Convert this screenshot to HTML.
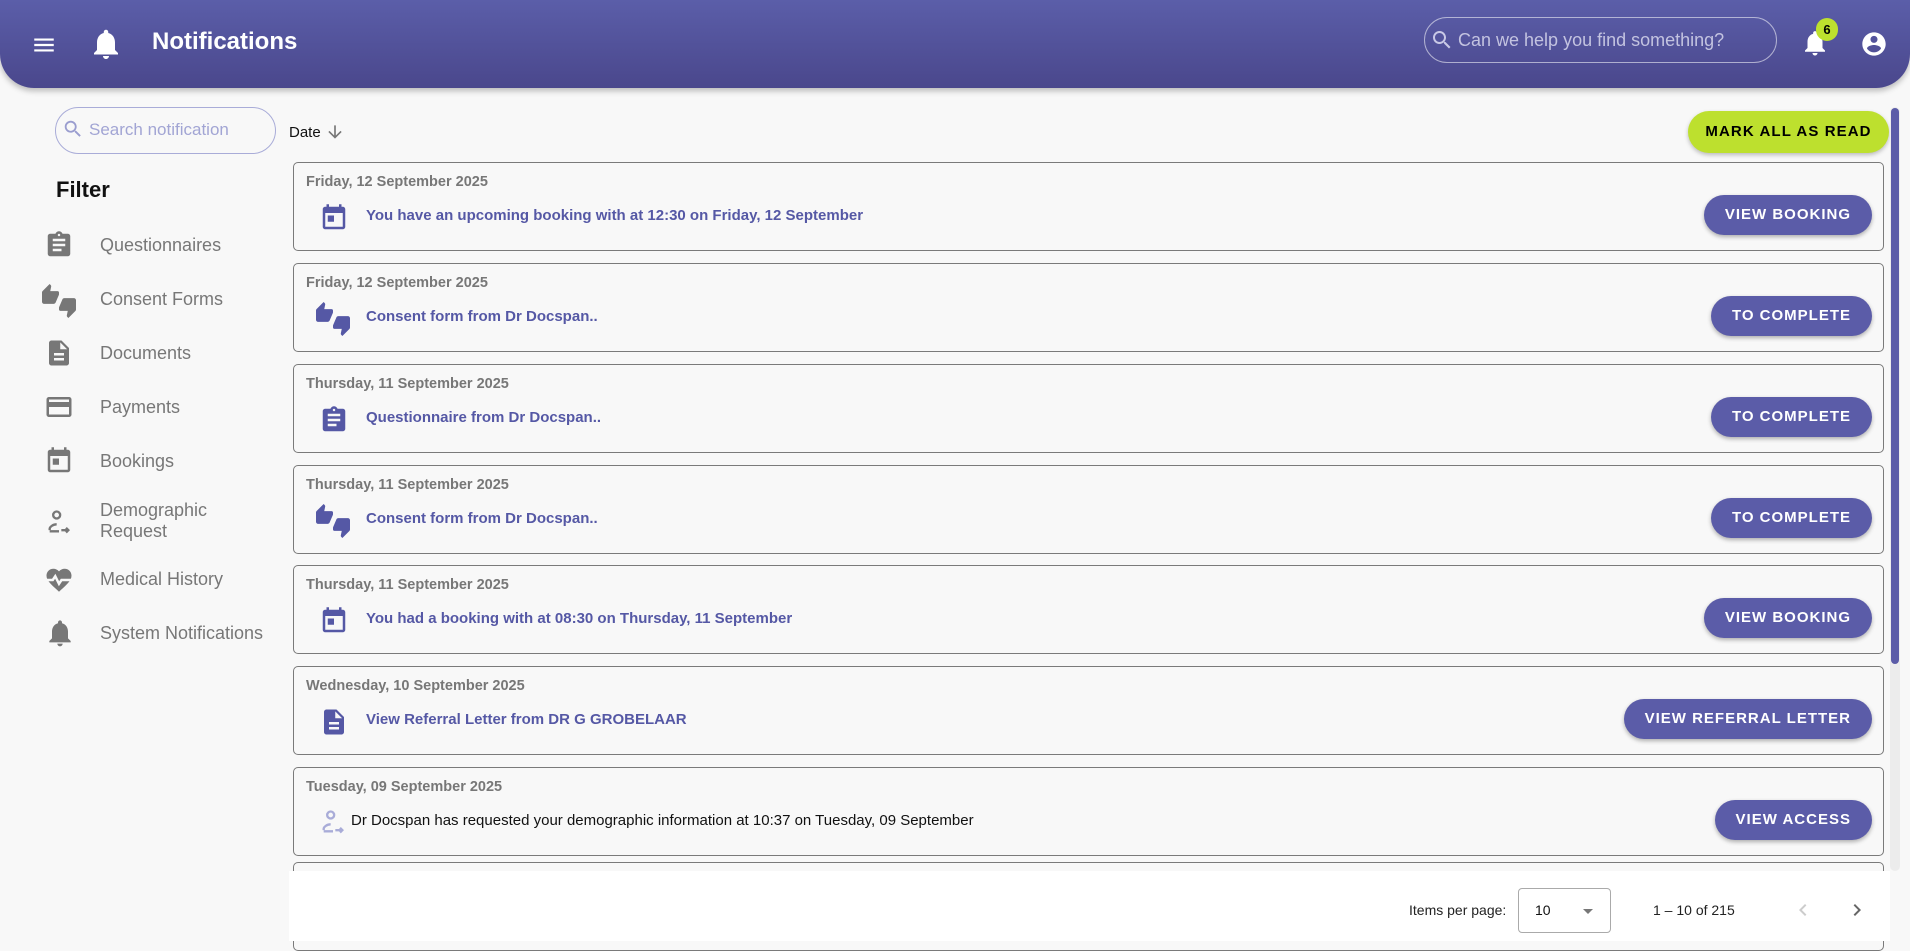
<!DOCTYPE html>
<html><head><meta charset="utf-8"><style>
*{margin:0;padding:0;box-sizing:border-box}
body{width:1910px;height:941px;overflow:hidden;background:#f8f8f8;font-family:"Liberation Sans",Arial,sans-serif;position:relative}
.abs{position:absolute}
.hdr{left:0;top:0;width:1910px;height:88px;background:linear-gradient(#5b5ea9,#4a478c);border-radius:0 0 34px 34px;box-shadow:0 3px 6px rgba(0,0,0,.25)}
svg{display:block}
.side{left:46px;color:#777;font-size:18px}
.card{left:293px;width:1591px;height:89px;border:1px solid #7a7a7a;border-radius:5px;background:#f8f8f8}
.card .d{position:absolute;left:12px;top:11px;font-size:14.5px;font-weight:bold;color:#777}
.card .ic{position:absolute;left:25px;top:40px}
.card .m{position:absolute;left:72px;top:44px;font-size:15px;font-weight:bold;color:#5558a5}
.card .b{position:absolute;right:11px;top:32px;height:40px;border-radius:20px;background:#5b5ca8;color:#fff;font-weight:bold;font-size:15px;letter-spacing:1px;line-height:40px;padding:0 21px;box-shadow:0 2px 4px rgba(0,0,0,.3)}
</style></head><body>
<div class="abs hdr"></div>
<svg class="abs" style="left:31px;top:32px" width="26" height="26" viewBox="0 0 24 24"><path fill="#fff" d="M3 18h18v-2H3v2zm0-5h18v-2H3v2zm0-7v2h18V6H3z"/></svg>
<svg class="abs" style="left:88px;top:26px" width="36" height="36" viewBox="0 0 24 24"><path fill="#fff" d="M12 22c1.1 0 2-.9 2-2h-4c0 1.1.89 2 2 2zm6-6v-5c0-3.07-1.64-5.64-4.5-6.32V4c0-.83-.67-1.5-1.5-1.5s-1.5.67-1.5 1.5v.68C7.63 5.36 6 7.92 6 11v5l-2 2v1h16v-1l-2-2z"/></svg>
<div class="abs" style="left:152px;top:28px;color:#fff;font-size:24px;font-weight:bold">Notifications</div>
<div class="abs" style="left:1424px;top:17px;width:353px;height:46px;border:1px solid rgba(255,255,255,.55);border-radius:23px"></div>
<svg class="abs" style="left:1430px;top:28px" width="24" height="24" viewBox="0 0 24 24"><path fill="#c9c9e6" d="M15.5 14h-.79l-.28-.27C15.41 12.59 16 11.11 16 9.5 16 5.91 13.09 3 9.5 3S3 5.91 3 9.5 5.91 16 9.5 16c1.61 0 3.09-.59 4.23-1.57l.27.28v.79l5 4.99L20.49 19l-4.99-5zm-6 0C7.01 14 5 11.99 5 9.5S7.01 5 9.5 5 14 7.01 14 9.5 11.99 14 9.5 14z"/></svg>
<div class="abs" style="left:1458px;top:30px;color:#c3c3e0;font-size:18px">Can we help you find something?</div>
<svg class="abs" style="left:1800px;top:28px" width="30" height="30" viewBox="0 0 24 24"><path fill="#fff" d="M12 22c1.1 0 2-.9 2-2h-4c0 1.1.89 2 2 2zm6-6v-5c0-3.07-1.64-5.64-4.5-6.32V4c0-.83-.67-1.5-1.5-1.5s-1.5.67-1.5 1.5v.68C7.63 5.36 6 7.92 6 11v5l-2 2v1h16v-1l-2-2z"/></svg>
<div class="abs" style="left:1816px;top:18px;width:22px;height:23px;border-radius:11px;background:#bde02e;color:#000;font-size:13px;font-weight:bold;text-align:center;line-height:23px">6</div>
<svg class="abs" style="left:1860px;top:30px" width="28" height="28" viewBox="0 0 24 24"><path fill="#fff" d="M12 2C6.48 2 2 6.48 2 12s4.48 10 10 10 10-4.48 10-10S17.52 2 12 2zm0 3c1.66 0 3 1.34 3 3s-1.34 3-3 3-3-1.34-3-3 1.34-3 3-3zm0 14.2c-2.5 0-4.71-1.28-6-3.22.03-1.99 4-3.08 6-3.08 1.99 0 5.97 1.09 6 3.08-1.29 1.94-3.5 3.22-6 3.22z"/></svg>

<div class="abs" style="left:55px;top:107px;width:221px;height:47px;border:1px solid #a9acd8;border-radius:24px"></div>
<svg class="abs" style="left:62px;top:118px" width="22" height="22" viewBox="0 0 24 24"><path fill="#9a9dcf" d="M15.5 14h-.79l-.28-.27C15.41 12.59 16 11.11 16 9.5 16 5.91 13.09 3 9.5 3S3 5.91 3 9.5 5.91 16 9.5 16c1.61 0 3.09-.59 4.23-1.57l.27.28v.79l5 4.99L20.49 19l-4.99-5zm-6 0C7.01 14 5 11.99 5 9.5S7.01 5 9.5 5 14 7.01 14 9.5 11.99 14 9.5 14z"/></svg>
<div class="abs" style="left:89px;top:120px;color:#a2a5d4;font-size:17px">Search notification</div>
<div class="abs" style="left:289px;top:124px;font-size:15px;color:#111">Date</div>
<svg class="abs" style="left:325px;top:122px" width="20" height="20" viewBox="0 0 24 24"><path fill="#777" d="M20 12l-1.41-1.41L13 16.17V4h-2v12.17l-5.58-5.59L4 12l8 8 8-8z"/></svg>
<div class="abs" style="left:56px;top:177px;font-size:22px;font-weight:bold;color:#111">Filter</div>

<svg class="abs" style="left:44px;top:230px" width="30" height="30" viewBox="0 0 24 24"><path fill="#777" d="M19 3h-4.18C14.4 1.84 13.3 1 12 1c-1.3 0-2.4.84-2.82 2H5c-1.1 0-2 .9-2 2v14c0 1.1.9 2 2 2h14c1.1 0 2-.9 2-2V5c0-1.1-.9-2-2-2zm-7 0c.55 0 1 .45 1 1s-.45 1-1 1-1-.45-1-1 .45-1 1-1zm2 14H7v-2h7v2zm3-4H7v-2h10v2zm0-4H7V7h10v2z"/></svg>
<div class="abs side" style="left:100px;top:235px">Questionnaires</div>
<svg class="abs" style="left:42px;top:284px" width="34" height="34" viewBox="0 0 24 24"><path fill="#777" d="M12 6c0-.55-.45-1-1-1H5.82l.66-3.18.02-.23c0-.31-.13-.59-.33-.8L5.38 0 .44 4.94C.17 5.21 0 5.59 0 6v6.5c0 .83.67 1.5 1.5 1.5h6.75c.62 0 1.15-.38 1.38-.91l2.26-5.29c.07-.17.11-.36.11-.55V6zm10.5 4h-6.75c-.62 0-1.15.38-1.38.91l-2.26 5.29c-.07.17-.11.36-.11.55V18c0 .55.45 1 1 1h5.18l-.66 3.18-.02.24c0 .31.13.59.33.8l.79.78 4.94-4.94c.27-.27.44-.65.44-1.06v-6.5c0-.83-.67-1.5-1.5-1.5z"/></svg>
<div class="abs side" style="left:100px;top:289px">Consent Forms</div>
<svg class="abs" style="left:44px;top:338px" width="30" height="30" viewBox="0 0 24 24"><path fill="#777" d="M14 2H6c-1.1 0-1.99.9-1.99 2L4 20c0 1.1.89 2 1.99 2H18c1.1 0 2-.9 2-2V8l-6-6zm2 16H8v-2h8v2zm0-4H8v-2h8v2zm-3-5V3.5L18.5 9H13z"/></svg>
<div class="abs side" style="left:100px;top:343px">Documents</div>
<svg class="abs" style="left:44px;top:392px" width="30" height="30" viewBox="0 0 24 24"><path fill="#777" d="M20 4H4c-1.11 0-1.99.89-1.99 2L2 18c0 1.11.89 2 2 2h16c1.11 0 2-.89 2-2V6c0-1.11-.89-2-2-2zm0 14H4v-6h16v6zm0-10H4V6h16v2z"/></svg>
<div class="abs side" style="left:100px;top:397px">Payments</div>
<svg class="abs" style="left:44px;top:446px" width="30" height="30" viewBox="0 0 24 24"><path fill="#777" d="M19 3h-1V1h-2v2H8V1H6v2H5c-1.11 0-1.99.9-1.99 2L3 19c0 1.1.89 2 2 2h14c1.1 0 2-.9 2-2V5c0-1.1-.9-2-2-2zm0 16H5V8h14v11zM7 10h5v5H7z"/></svg>
<div class="abs side" style="left:100px;top:451px">Bookings</div>
<svg class="abs" style="left:45px;top:508px" width="28" height="28" viewBox="0 0 24 24" fill="none" stroke="#777" stroke-width="2"><circle cx="10" cy="6" r="3"/><path d="M4 19v-1c0-2 3-4 6-4"/><path d="M4 20h8M14 19h6M18 17l2 2-2 2"/></svg>
<div class="abs side" style="left:100px;top:500px;line-height:21px">Demographic<br>Request</div>
<svg class="abs" style="left:44px;top:565px" width="30" height="30" viewBox="0 0 24 24"><path fill="#777" d="M12 21.35l-1.45-1.32C5.4 15.36 2 12.28 2 8.5 2 5.42 4.42 3 7.5 3c1.74 0 3.41.81 4.5 2.09C13.09 3.81 14.76 3 16.5 3 19.58 3 22 5.42 22 8.5c0 3.78-3.4 6.86-8.55 11.54L12 21.35z"/><path d="M1 12h6l2-3 3 6 2-3h9" stroke="#f8f8f8" stroke-width="2" fill="none"/></svg>
<div class="abs side" style="left:100px;top:569px">Medical History</div>
<svg class="abs" style="left:44px;top:617px" width="32" height="32" viewBox="0 0 24 24"><path fill="#777" d="M12 22c1.1 0 2-.9 2-2h-4c0 1.1.89 2 2 2zm6-6v-5c0-3.07-1.64-5.64-4.5-6.32V4c0-.83-.67-1.5-1.5-1.5s-1.5.67-1.5 1.5v.68C7.63 5.36 6 7.92 6 11v5l-2 2v1h16v-1l-2-2z"/></svg>
<div class="abs side" style="left:100px;top:623px">System Notifications</div>

<div class="abs" style="left:1688px;top:111px;width:201px;height:42px;border-radius:21px;background:#bde02e;color:#000;font-weight:bold;font-size:15px;letter-spacing:1.1px;text-align:center;line-height:42px;box-shadow:0 2px 4px rgba(0,0,0,.25)">MARK ALL AS READ</div>
<div class="abs" style="left:1890px;top:107px;width:10px;height:764px;background:#ececec;border-radius:5px"></div>
<div class="abs" style="left:1891px;top:108px;width:8px;height:556px;background:#5b5ca8;border-radius:4px"></div>

<div class="abs card" style="top:162px"><div class="d">Friday, 12 September 2025</div><svg class="ic" width="30" height="30" viewBox="0 0 24 24"><path fill="#5558a5" d="M19 3h-1V1h-2v2H8V1H6v2H5c-1.11 0-1.99.9-1.99 2L3 19c0 1.1.89 2 2 2h14c1.1 0 2-.9 2-2V5c0-1.1-.9-2-2-2zm0 16H5V8h14v11zM7 10h5v5H7z"/></svg><div class="m">You have an upcoming booking with at 12:30 on Friday, 12 September</div><div class="b">VIEW BOOKING</div></div>
<div class="abs card" style="top:263px"><div class="d">Friday, 12 September 2025</div><svg class="ic" width="34" height="34" viewBox="0 0 24 24" style="left:22px;top:38px"><path fill="#5558a5" d="M12 6c0-.55-.45-1-1-1H5.82l.66-3.18.02-.23c0-.31-.13-.59-.33-.8L5.38 0 .44 4.94C.17 5.21 0 5.59 0 6v6.5c0 .83.67 1.5 1.5 1.5h6.75c.62 0 1.15-.38 1.38-.91l2.26-5.29c.07-.17.11-.36.11-.55V6zm10.5 4h-6.75c-.62 0-1.15.38-1.38.91l-2.26 5.29c-.07.17-.11.36-.11.55V18c0 .55.45 1 1 1h5.18l-.66 3.18-.02.24c0 .31.13.59.33.8l.79.78 4.94-4.94c.27-.27.44-.65.44-1.06v-6.5c0-.83-.67-1.5-1.5-1.5z"/></svg><div class="m">Consent form from Dr Docspan..</div><div class="b">TO COMPLETE</div></div>
<div class="abs card" style="top:364px"><div class="d">Thursday, 11 September 2025</div><svg class="ic" width="30" height="30" viewBox="0 0 24 24"><path fill="#5558a5" d="M19 3h-4.18C14.4 1.84 13.3 1 12 1c-1.3 0-2.4.84-2.82 2H5c-1.1 0-2 .9-2 2v14c0 1.1.9 2 2 2h14c1.1 0 2-.9 2-2V5c0-1.1-.9-2-2-2zm-7 0c.55 0 1 .45 1 1s-.45 1-1 1-1-.45-1-1 .45-1 1-1zm2 14H7v-2h7v2zm3-4H7v-2h10v2zm0-4H7V7h10v2z"/></svg><div class="m">Questionnaire from Dr Docspan..</div><div class="b">TO COMPLETE</div></div>
<div class="abs card" style="top:465px"><div class="d">Thursday, 11 September 2025</div><svg class="ic" width="34" height="34" viewBox="0 0 24 24" style="left:22px;top:38px"><path fill="#5558a5" d="M12 6c0-.55-.45-1-1-1H5.82l.66-3.18.02-.23c0-.31-.13-.59-.33-.8L5.38 0 .44 4.94C.17 5.21 0 5.59 0 6v6.5c0 .83.67 1.5 1.5 1.5h6.75c.62 0 1.15-.38 1.38-.91l2.26-5.29c.07-.17.11-.36.11-.55V6zm10.5 4h-6.75c-.62 0-1.15.38-1.38.91l-2.26 5.29c-.07.17-.11.36-.11.55V18c0 .55.45 1 1 1h5.18l-.66 3.18-.02.24c0 .31.13.59.33.8l.79.78 4.94-4.94c.27-.27.44-.65.44-1.06v-6.5c0-.83-.67-1.5-1.5-1.5z"/></svg><div class="m">Consent form from Dr Docspan..</div><div class="b">TO COMPLETE</div></div>
<div class="abs card" style="top:565px"><div class="d">Thursday, 11 September 2025</div><svg class="ic" width="30" height="30" viewBox="0 0 24 24"><path fill="#5558a5" d="M19 3h-1V1h-2v2H8V1H6v2H5c-1.11 0-1.99.9-1.99 2L3 19c0 1.1.89 2 2 2h14c1.1 0 2-.9 2-2V5c0-1.1-.9-2-2-2zm0 16H5V8h14v11zM7 10h5v5H7z"/></svg><div class="m">You had a booking with at 08:30 on Thursday, 11 September</div><div class="b">VIEW BOOKING</div></div>
<div class="abs card" style="top:666px"><div class="d">Wednesday, 10 September 2025</div><svg class="ic" width="30" height="30" viewBox="0 0 24 24"><path fill="#5558a5" d="M14 2H6c-1.1 0-1.99.9-1.99 2L4 20c0 1.1.89 2 1.99 2H18c1.1 0 2-.9 2-2V8l-6-6zm2 16H8v-2h8v2zm0-4H8v-2h8v2zm-3-5V3.5L18.5 9H13z"/></svg><div class="m">View Referral Letter from DR G GROBELAAR</div><div class="b">VIEW REFERRAL LETTER</div></div>
<div class="abs card" style="top:767px"><div class="d">Tuesday, 09 September 2025</div><svg class="ic" width="28" height="28" viewBox="0 0 24 24" fill="none" stroke="#a9acd8" stroke-width="2"><circle cx="10" cy="6" r="3"/><path d="M4 19v-1c0-2 3-4 6-4"/><path d="M4 20h8M14 19h6M18 17l2 2-2 2"/></svg><div class="m" style="left:57px;font-weight:normal;color:#111">Dr Docspan has requested your demographic information at 10:37 on Tuesday, 09 September</div><div class="b">VIEW ACCESS</div></div>
<div class="abs card" style="top:862px"></div>

<div class="abs" style="left:289px;top:871px;width:1601px;height:70px;background:#fff"></div>
<div class="abs" style="left:1409px;top:902px;font-size:14px;color:#222">Items per page:</div>
<div class="abs" style="left:1518px;top:888px;width:93px;height:45px;border:1px solid #aaa;border-radius:4px"></div>
<div class="abs" style="left:1535px;top:902px;font-size:14px;color:#111">10</div>
<div class="abs" style="left:1583px;top:909px;width:0;height:0;border-left:5px solid transparent;border-right:5px solid transparent;border-top:5px solid #777"></div>
<div class="abs" style="left:1653px;top:902px;font-size:14px;color:#222">1 – 10 of 215</div>
<svg class="abs" style="left:1791px;top:898px" width="24" height="24" viewBox="0 0 24 24"><path fill="#ccc" d="M15.41 7.41L14 6l-6 6 6 6 1.41-1.41L10.83 12z"/></svg>
<svg class="abs" style="left:1845px;top:898px" width="24" height="24" viewBox="0 0 24 24"><path fill="#666" d="M10 6L8.59 7.41 13.170 12l-4.58 4.59L10 18l6-6z"/></svg>
</body></html>
